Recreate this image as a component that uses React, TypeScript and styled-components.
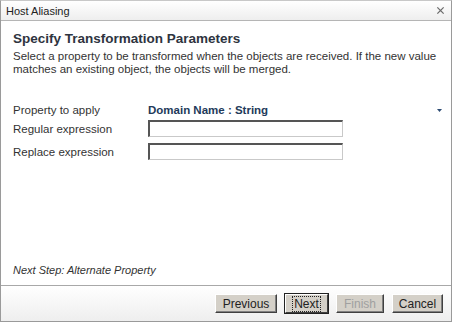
import React from 'react';
import styled, { createGlobalStyle } from 'styled-components';

const GlobalStyle = createGlobalStyle`
  html, body {
    margin: 0;
    padding: 0;
    background: #ffffff;
  }
  body {
    font-family: Tahoma, "Liberation Sans", Arial, sans-serif;
  }
`;

const fields = [
  { id: 'regex', label: 'Regular expression' },
  { id: 'replace', label: 'Replace expression' },
];

const buttons = [
  { id: 'prev', text: 'Previous', width: 62 },
  { id: 'next', text: 'Next', width: 43, focused: true },
  { id: 'finish', text: 'Finish', width: 48, disabled: true },
  { id: 'cancel', text: 'Cancel', width: 51 },
];

const App = () => {
  return (
    <>
      <GlobalStyle />
      <Window>
        <TitleBar>
          <span>Host Aliasing</span>
          <CloseIcon viewBox="0 0 10 10">
            <path d="M1.5 1.5 L8.5 8.5 M8.5 1.5 L1.5 8.5" />
          </CloseIcon>
        </TitleBar>
        <Body>
          <Heading>Specify Transformation Parameters</Heading>
          <Description>
            Select a property to be transformed when the objects are received. If the new value
            matches an existing object, the objects will be merged.
          </Description>
          <Form>
            <Row>
              <Label>Property to apply</Label>
              <SelectValue>Domain Name : String</SelectValue>
              <Caret viewBox="0 0 5 3">
                <path d="M0 0 H5 L2.5 3 Z" />
              </Caret>
            </Row>
            {fields.map((field) => (
              <Row key={field.id} $tall>
                <Label>{field.label}</Label>
                <TextInput type="text" />
              </Row>
            ))}
          </Form>
          <Spacer />
          <NextStep>Next Step: Alternate Property</NextStep>
        </Body>
        <Footer>
          {buttons.map((button) => (
            <Button
              key={button.id}
              $width={button.width}
              $focused={button.focused}
              disabled={button.disabled}
            >
              <span className="caption">{button.text}</span>
            </Button>
          ))}
        </Footer>
      </Window>
    </>
  );
};

const Window = styled.div`
  display: flex;
  flex-direction: column;
  box-sizing: border-box;
  width: 452px;
  height: 322px;
  border: 1px solid #9a9a9a;
  border-top-color: #c8c8c8;
  background: #ffffff;
  color: #333333;
  font-size: 11.5px;
`;

const TitleBar = styled.div`
  display: flex;
  align-items: center;
  justify-content: space-between;
  height: 19px;
  padding: 0 6px 0 5px;
  border-bottom: 1px solid #b5b5b5;
  background: linear-gradient(#ffffff, #eeeeee);
  color: #222222;
  font-size: 11px;
`;

const CloseIcon = styled.svg`
  width: 9px;
  height: 9px;
  fill: none;
  stroke: #6b6b6b;
  stroke-width: 1.4;
`;

const Body = styled.div`
  display: flex;
  flex-direction: column;
  flex: 1;
  padding: 8px 12px 0 12px;
`;

const Heading = styled.h1`
  margin: 0;
  font-size: 13.5px;
  font-weight: bold;
  color: #2e3440;
  line-height: 20px;
`;

const Description = styled.p`
  margin: 1px 0 0 0;
  line-height: 13px;
  color: #333333;
  width: 424px;
`;

const Form = styled.div`
  display: flex;
  flex-direction: column;
  margin-top: 27px;
`;

const Row = styled.div<{ $tall?: boolean }>`
  display: flex;
  align-items: center;
  height: ${({ $tall }) => ($tall ? '23px' : '14px')};
`;

const Label = styled.span`
  width: 135px;
  color: #333333;
`;

const SelectValue = styled.span`
  flex: 1;
  font-weight: bold;
  color: #233a5a;
`;

const Caret = styled.svg`
  width: 5px;
  height: 3px;
  margin-right: -3px;
  fill: #2d4b73;
`;

const TextInput = styled.input`
  box-sizing: border-box;
  width: 195px;
  height: 17px;
  margin: 0;
  padding: 0;
  border: 1px solid #c9c9c9;
  border-top: 2px solid #555555;
  border-left: 2px solid #555555;
  background: #ffffff;
`;

const Spacer = styled.div`
  flex: 1;
`;

const NextStep = styled.div`
  font-style: italic;
  font-size: 11px;
  color: #333333;
  margin-bottom: 9px;
`;

const Footer = styled.div`
  display: flex;
  justify-content: flex-end;
  align-items: center;
  gap: 8px;
  height: 35px;
  padding-right: 8px;
  border-top: 1px solid #a8a8a8;
  background: linear-gradient(#ffffff, #eeeeee);
`;

const Button = styled.button<{ $width: number; $focused?: boolean }>`
  box-sizing: border-box;
  width: ${({ $width }) => $width}px;
  height: 19px;
  padding: 0;
  font-family: inherit;
  font-size: 12px;
  color: #222222;
  background: #d4d0c8;
  border: 1px solid;
  border-color: #ffffff #404040 #404040 #ffffff;
  box-shadow: ${({ $focused }) =>
    $focused ? '0 0 0 1px #222222' : 'inset -1px -1px 0 #808080'};

  & .caption {
    padding: 0 1px;
    outline: ${({ $focused }) => ($focused ? '1px dotted #222222' : 'none')};
  }

  &:disabled {
    color: #a0a0a0;
  }
`;

export default App;
